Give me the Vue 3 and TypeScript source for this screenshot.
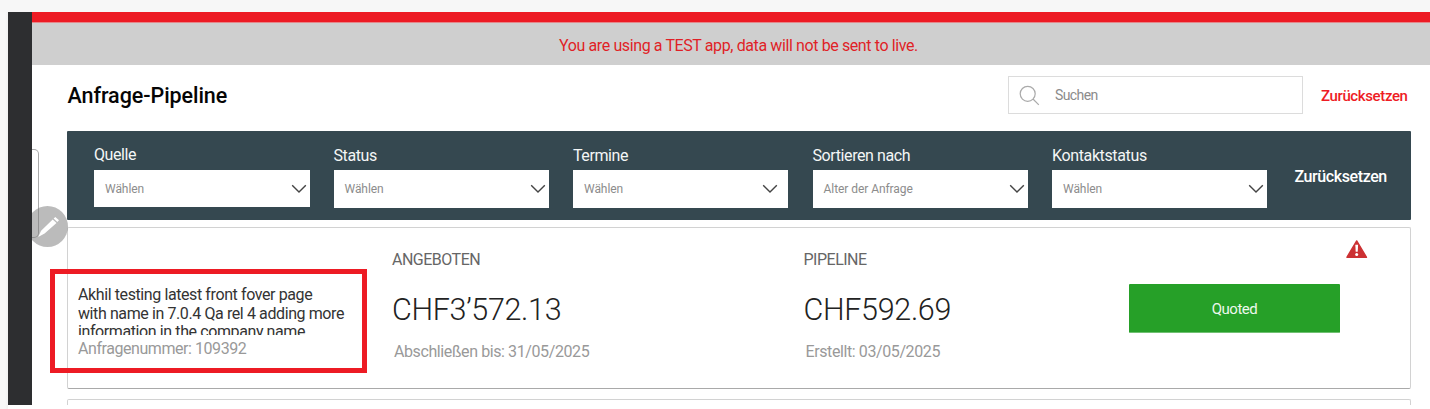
<script setup lang="ts">
interface Filter {
  label: string
  value: string
}

const filters: Filter[] = [
  { label: 'Quelle', value: 'Wählen' },
  { label: 'Status', value: 'Wählen' },
  { label: 'Termine', value: 'Wählen' },
  { label: 'Sortieren nach', value: 'Alter der Anfrage' },
  { label: 'Kontaktstatus', value: 'Wählen' },
]
</script>

<template>
  <div class="frame">
    <div class="window">
      <aside class="sidebar"></aside>
      <main class="main">
        <div class="topline"></div>
        <div class="notice"><span>You are using a TEST app, data will not be sent to live.</span></div>

        <header class="header">
          <h1 class="title">Anfrage-Pipeline</h1>
          <div class="search">
            <svg class="search-icon" width="22" height="22" viewBox="0 0 22 22">
              <circle cx="8.7" cy="8.8" r="7.5" />
              <path d="M14 14 19.8 19.8" />
            </svg>
            <span class="search-text">Suchen</span>
          </div>
          <span class="reset-link">Zurücksetzen</span>
        </header>

        <section class="filters">
          <div v-for="f in filters" :key="f.label" class="filter">
            <span class="filter-label">{{ f.label }}</span>
            <div class="select">
              <span class="select-value">{{ f.value }}</span>
              <svg class="chevron" width="16" height="10" viewBox="0 0 16 10">
                <path d="M1.2 1.2 8 8 14.8 1.2" />
              </svg>
            </div>
          </div>
          <span class="filter-reset">Zurücksetzen</span>
        </section>

        <article class="card">
          <div class="company">
            <p class="company-name">Akhil testing latest front fover page<br />with name in 7.0.4 Qa rel 4 adding more<br />information in the company name</p>
            <p class="inquiry">Anfragenummer: 109392</p>
          </div>
          <div class="metric offered">
            <span class="metric-label">ANGEBOTEN</span>
            <span class="metric-value">CHF3’572.13</span>
            <span class="metric-date">Abschließen bis: 31/05/2025</span>
          </div>
          <div class="metric pipeline">
            <span class="metric-label">PIPELINE</span>
            <span class="metric-value">CHF592.69</span>
            <span class="metric-date">Erstellt: 03/05/2025</span>
          </div>
          <div class="status">Quoted</div>
          <svg class="warning" width="22" height="19" viewBox="0 0 22 19">
            <path class="tri" d="M10.7 0.9 20.5 17.3H0.9Z" />
            <path class="mark" d="M9.3 4.8H12.1L11.7 11.8H9.7Z" />
            <circle class="mark" cx="10.7" cy="14.4" r="1.5" />
          </svg>
        </article>
        <article class="card next"></article>
      </main>
    </div>

    <div class="side-tab"></div>
    <div class="edit-clip">
      <div class="edit">
        <svg width="41" height="41" viewBox="0 0 41 41">
          <path d="M11.2 30.9 14.1 24.8 25.7 13.4 29.5 17 17.6 27.6ZM26.6 12.5 28.3 10.9 32 14.3 30.3 16.1Z" />
        </svg>
      </div>
    </div>
    <div class="highlight"></div>
  </div>
</template>

<style>
body {
  margin: 0;
  overflow: hidden;
}
</style>

<style scoped>
.frame {
  position: relative;
  box-sizing: border-box;
  width: 1430px;
  height: 409px;
  padding: 12px 0 0 8px;
  overflow: hidden;
  background: linear-gradient(90deg, #f8f8f8 5px, #f1f1f1 8px, transparent 8px) 0 12px no-repeat,
    linear-gradient(#f7f7f7 12px, #fff 12px);
  font-family: Roboto, 'Liberation Sans', sans-serif;
  color: #333;
}
.window {
  display: flex;
  height: 393px;
}
.sidebar {
  width: 24px;
  background: #2d2e30;
}
.main {
  flex: 1;
  overflow: hidden;
  background: #fff;
}
.topline {
  height: 10px;
  background: #ed1b24;
  border-bottom: 1px solid #e5878a;
}
.notice {
  height: 42px;
  padding-left: 15px;
  background: #cfcfcf;
  text-align: center;
  font-size: 16px;
  letter-spacing: -0.39px;
  line-height: 45px;
  color: #e01f27;
}
.header {
  display: flex;
  height: 66px;
  padding-left: 35.5px;
}
.title {
  width: 940.5px;
  margin: 0;
  font-size: 21.5px;
  letter-spacing: -0.06px;
  line-height: 61px;
  font-weight: 500;
  color: #050505;
  white-space: nowrap;
}
.search {
  display: flex;
  box-sizing: border-box;
  width: 295px;
  height: 38px;
  margin-top: 11px;
  border: 1px solid #dcdcdc;
}
.search-icon {
  margin: 8px 0 0 10px;
  fill: none;
  stroke: #aaa;
  stroke-width: 1.2;
}
.search-text {
  margin-left: 14px;
  font-size: 14px;
  letter-spacing: -0.6px;
  line-height: 36px;
  color: #8b8b8b;
}
.reset-link {
  margin-left: 18px;
  font-size: 15px;
  letter-spacing: -0.38px;
  line-height: 62px;
  font-weight: 500;
  color: #ee1c24;
}
.filters {
  display: flex;
  box-sizing: border-box;
  width: 1344px;
  height: 89px;
  margin-left: 35px;
  padding-left: 27px;
  border-radius: 1px;
  background: #354850;
}
.filter {
  width: 215px;
  margin-right: 24.5px;
}
.filter-label {
  display: block;
  height: 39px;
  font-size: 16px;
  letter-spacing: -0.4px;
  line-height: 50px;
  color: #f4f6f6;
}
.filter:first-child .filter-label {
  line-height: 48px;
}
.filter:nth-child(5) .filter-label {
  letter-spacing: -0.37px;
}
.select {
  display: flex;
  align-items: center;
  justify-content: space-between;
  height: 38px;
  padding: 0 3px 0 11px;
  box-sizing: border-box;
  background: #fff;
}
.filter:first-child .select {
  width: 216px;
  height: 37px;
}
.filter:nth-child(3) .select {
  padding-right: 10px;
}
.select-value {
  font-size: 12px;
  letter-spacing: -0.06px;
  color: #8c8c8c;
}
.chevron {
  fill: none;
  stroke: #444;
  stroke-width: 1.4;
}
.filter-reset {
  margin-left: 3px;
  font-size: 16px;
  letter-spacing: -0.4px;
  line-height: 91px;
  font-weight: 500;
  color: #fff;
}
.card {
  position: relative;
  display: flex;
  box-sizing: border-box;
  width: 1344px;
  height: 162px;
  margin: 7px 0 0 35px;
  border: 1px solid #d2d2d2;
  border-bottom-color: #a9a9a9;
  border-radius: 2px;
  background: #fff;
}
.card.next {
  margin-top: 10px;
}
.company {
  width: 314px;
  padding: 58px 0 0 10px;
  box-sizing: content-box;
}
.company-name {
  height: 49px;
  margin: 0;
  overflow: hidden;
  font-size: 16px;
  letter-spacing: -0.4px;
  line-height: 18.6px;
  white-space: nowrap;
  color: #333;
}
.inquiry {
  margin: 3px 0 0;
  font-size: 16px;
  letter-spacing: -0.44px;
  line-height: 21px;
  color: #999;
}
.metric {
  display: flex;
  flex-direction: column;
  width: 411.5px;
  white-space: nowrap;
}
.metric-label {
  margin-top: 22px;
  font-size: 16px;
  letter-spacing: -0.5px;
  line-height: 20px;
  color: #666;
}
.metric-value {
  margin-top: 20px;
  font-size: 30.5px;
  letter-spacing: -0.32px;
  line-height: 40px;
  font-weight: 300;
  color: #222;
}
.metric-date {
  margin: 12px 0 0 2px;
  font-size: 16px;
  letter-spacing: -0.4px;
  line-height: 20px;
  color: #999;
}
.pipeline {
  width: 325.5px;
}
.status {
  width: 211px;
  height: 48px;
  margin-top: 56px;
  border-radius: 1px;
  background: #26a028;
  border-bottom: 1px solid #70c072;
  box-sizing: content-box;
  text-align: center;
  font-size: 15px;
  letter-spacing: -0.5px;
  line-height: 50px;
  color: #edf8ed;
}
.warning {
  margin: 12px 0 0 5.5px;
}
.tri {
  fill: #cc3133;
  stroke: #cc3133;
  stroke-width: 1.4;
  stroke-linejoin: round;
}
.mark {
  fill: #fff;
}
.side-tab {
  position: absolute;
  left: 32px;
  top: 149px;
  box-sizing: border-box;
  width: 7px;
  height: 89px;
  border: 1px solid #aaa;
  border-left: 0;
  border-radius: 0 5px 5px 0;
}
.edit-clip {
  position: absolute;
  left: 32px;
  top: 205px;
  width: 37px;
  height: 43px;
  overflow: hidden;
}
.edit {
  width: 41px;
  height: 41px;
  margin: 1px 0 0 -5px;
  border-radius: 50%;
  background: rgba(125, 125, 125, 0.52);
}
.edit svg {
  display: block;
  fill: #fff;
}
.highlight {
  position: absolute;
  left: 50px;
  top: 269px;
  box-sizing: border-box;
  width: 317px;
  height: 104px;
  border: 5px solid #ed1b24;
}
</style>
